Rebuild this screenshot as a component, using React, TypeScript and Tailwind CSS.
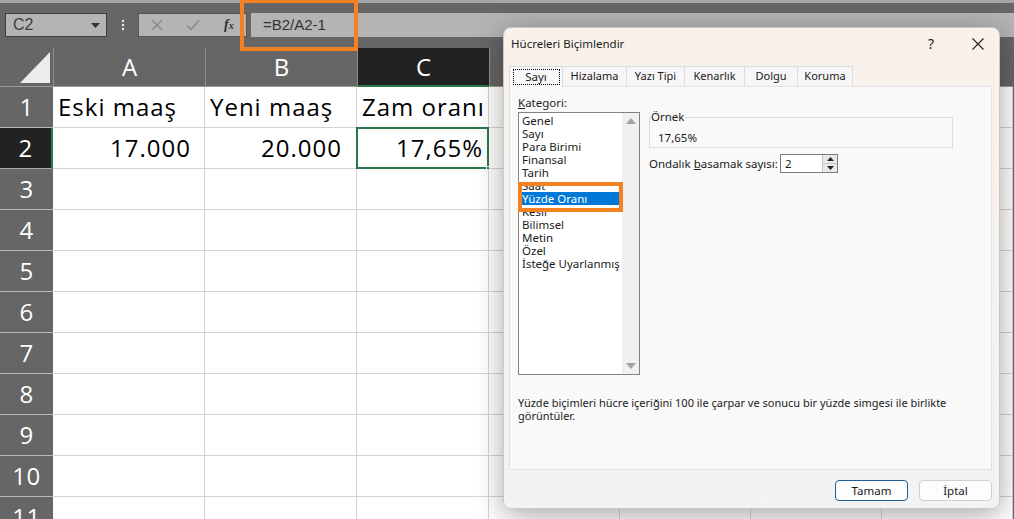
import React from "react";

const sheetFont = { fontFamily: '"Open Sans", "Noto Sans", sans-serif' };
const uiFont = { fontFamily: '"Noto Sans", "Open Sans", sans-serif' };

const letters = ["A", "B", "C", "D", "E", "F", "G"];
const rows = [1, 2, 3, 4, 5, 6, 7, 8, 9, 10, 11];

const cells: Record<string, { text: string; right?: boolean; pr?: string }> = {
  A1: { text: "Eski maaş" },
  B1: { text: "Yeni maaş" },
  C1: { text: "Zam oranı" },
  A2: { text: "17.000", right: true, pr: "pr-[13px]" },
  B2: { text: "20.000", right: true, pr: "pr-[14px]" },
  C2: { text: "17,65%", right: true, pr: "pr-[5px]" },
};

const categories = [
  "Genel",
  "Sayı",
  "Para Birimi",
  "Finansal",
  "Tarih",
  "Saat",
  "Yüzde Oranı",
  "Kesir",
  "Bilimsel",
  "Metin",
  "Özel",
  "İsteğe Uyarlanmış",
];

const tabs = [
  { label: "Sayı", w: "w-[54px]" },
  { label: "Hizalama", w: "w-[64px]" },
  { label: "Yazı Tipi", w: "w-[58px]" },
  { label: "Kenarlık", w: "w-[60px]" },
  { label: "Dolgu", w: "w-[53px]" },
  { label: "Koruma", w: "w-[55px]" },
];

// formula bar across the top
const FormulaBar = () => {
  return (
    <div className="h-[45px] flex items-start pt-[10px] pl-[5px]">
      <div className="w-[102px] h-[24px] bg-[#b4b4b4] border border-[#3f3f3f] flex items-center justify-between pl-[7px] pr-[6px]">
        <span className="text-[16px] text-[#3c3c3c]" style={{ fontFamily: '"Liberation Sans", Arial, sans-serif' }}>
          C2
        </span>
        <svg width="9" height="5" viewBox="0 0 9 5">
          <path d="M0 0 L9 0 L4.5 5 Z" fill="#333" />
        </svg>
      </div>
      <div className="w-[31px] h-[24px] flex items-center justify-center">
        <svg width="4" height="12" viewBox="0 0 4 12">
          <circle cx="2" cy="2" r="1.2" fill="#e6e6e6" />
          <circle cx="2" cy="6" r="1.2" fill="#e6e6e6" />
          <circle cx="2" cy="10" r="1.2" fill="#e6e6e6" />
        </svg>
      </div>
      <div className="w-[109px] h-[24px] bg-[#b4b4b4] border border-[#555] flex items-center">
        <svg width="12" height="12" viewBox="0 0 12 12" className="ml-[12px]">
          <path d="M1 1 L11 11 M11 1 L1 11" stroke="#8b8b8b" strokeWidth="1.6" />
        </svg>
        <svg width="14" height="12" viewBox="0 0 14 12" className="ml-[23px]">
          <path d="M1 6.5 L5 10.5 L13 1.5" stroke="#8b8b8b" strokeWidth="1.6" fill="none" />
        </svg>
        <span
          className="ml-[24px] text-[14px] italic font-bold text-[#2e2e2e] leading-none"
          style={{ fontFamily: '"Liberation Serif", serif' }}
        >
          f<span className="text-[10px]">x</span>
        </span>
      </div>
      <div className="w-[4px]" />
      <div className="flex-1 h-[24px] bg-[#b4b4b4] flex items-center pl-[12px]">
        <span className="text-[15px] text-[#333]" style={{ fontFamily: '"Liberation Sans", Arial, sans-serif' }}>
          =B2/A2-1
        </span>
      </div>
    </div>
  );
};

const Sheet = () => {
  return (
    <div className="grid grid-cols-[53px_152px_152px_132px_131px_131px_131px_131px]" style={sheetFont}>
      {/* header row */}
      <div className="h-[39px] bg-[#666] border-b border-[#9a9a9a] relative overflow-hidden">
        <svg width="53" height="39" viewBox="0 0 53 39" className="absolute inset-0">
          <path d="M50 4 L50 35 L20 35 Z" fill="#ececec" />
        </svg>
      </div>
      {letters.map((l) => (
        <div
          key={l}
          className={
            l === "C"
              ? "h-[39px] bg-[#222] border-l border-[#8e8e8e] border-b-2 border-b-[#2c7a4b] flex items-center justify-center text-white text-[24px]"
              : "h-[39px] bg-[#666] border-l border-[#8e8e8e] border-b border-b-[#9a9a9a] flex items-center justify-center text-white text-[24px]"
          }
        >
          {l}
        </div>
      ))}
      {rows.map((r) => (
        <React.Fragment key={r}>
          <div
            className={
              r === 2
                ? "h-[41px] bg-[#222] border-r-2 border-[#2c7a4b] border-b border-b-[#a9a9a9] flex items-center justify-center text-white text-[24px] tracking-[0.5px]"
                : "h-[41px] bg-[#666] border-b border-[#b8b8b8] flex items-center justify-center text-white text-[24px] tracking-[0.5px]"
            }
          >
            {r}
          </div>
          {letters.map((l) => {
            const c = cells[l + r];
            const sel = l === "C" && r === 2;
            return (
              <div
                key={l}
                className={
                  "h-[41px] bg-white border-r border-b border-[#d4d4d4] flex items-center relative text-[24px] tracking-[1px] text-black " +
                  (c && c.right ? "justify-end " + (c.pr || "") : "pl-[5px]")
                }
              >
                {c ? c.text : null}
                {sel && (
                  <>
                    <div className="absolute -left-px -top-px right-[-1px] bottom-[-1px] border-2 border-[#2c7a4b]" />
                    <div className="absolute right-[-5px] bottom-[-5px] w-[7px] h-[7px] bg-[#2c7a4b] border border-white" />
                  </>
                )}
              </div>
            );
          })}
        </React.Fragment>
      ))}
    </div>
  );
};

const Dialog = () => {
  return (
    <div
      className="absolute left-[503px] top-[27px] w-[497px] h-[482px] rounded-[8px] bg-linear-to-b from-[#f9f1ea] to-[#f3f3f3] shadow-[0_6px_28px_rgba(0,0,0,0.35)] flex flex-col text-[#1b1b1b] border border-[#c9c9c9]"
      style={uiFont}
    >
      {/* title bar */}
      <div className="h-[31px] flex items-center pl-[7px] relative">
        <span className="text-[11.5px]">Hücreleri Biçimlendir</span>
        <span className="absolute left-[424px] top-[5px] text-[14px] text-[#222]">?</span>
        <svg width="12" height="12" viewBox="0 0 12 12" className="absolute left-[468px] top-[10px]">
          <path d="M0.5 0.5 L11.5 11.5 M11.5 0.5 L0.5 11.5" stroke="#222" strokeWidth="1.1" />
        </svg>
      </div>
      {/* tabs */}
      <div className="mt-[6px] ml-[5px] flex items-end h-[21px]">
        {tabs.map((t, i) =>
          i === 0 ? (
            <div
              key={t.label}
              className={t.w + " h-[21px] bg-[#f9f9f9] border border-b-0 border-[#dadada] flex items-center justify-center relative z-10 -mb-px"}
            >
              <div className="absolute left-[3px] right-[2px] top-[2px] bottom-[2px] border border-dotted border-black" />
              <span className="text-[11.5px]">{t.label}</span>
            </div>
          ) : (
            <div
              key={t.label}
              className={t.w + " h-[20px] bg-[#f6f6f6] border border-l-0 border-b-0 border-[#dedede] flex items-center justify-center"}
            >
              <span className="text-[11px]">{t.label}</span>
            </div>
          )
        )}
      </div>
      {/* tab panel */}
      <div className="ml-[5px] w-[483px] h-[384px] bg-[#f9f9f9] border border-[#e2e2e2] flex flex-col pl-[8px] pt-[8px]">
        <div className="flex">
          <div className="flex flex-col w-[122px]">
            <span className="text-[11.5px] leading-[15px]">
              <span className="underline">K</span>ategori:
            </span>
            <div className="mt-[2px] h-[263px] border border-[#828282] bg-white flex relative">
              <div className="flex-1 pt-px pl-[3px] flex flex-col">
                {categories.map((c) =>
                  c === "Yüzde Oranı" ? (
                    <span key={c} className="text-[11.5px] leading-[13px] bg-[#0078d7] text-white">
                      {c}
                    </span>
                  ) : (
                    <span key={c} className="text-[11.5px] leading-[13px]">
                      {c}
                    </span>
                  )
                )}
              </div>
              <div className="w-[17px] bg-[#f0f0f0] flex flex-col justify-between items-center py-[5px]">
                <svg width="10" height="6" viewBox="0 0 10 6">
                  <path d="M0 6 L10 6 L5 0 Z" fill="#a3a3a3" />
                </svg>
                <svg width="10" height="6" viewBox="0 0 10 6">
                  <path d="M0 0 L10 0 L5 6 Z" fill="#a3a3a3" />
                </svg>
              </div>
              {/* orange highlight around the selected item */}
              <div className="absolute left-[-1px] top-[69px] w-[105px] h-[30px] border-[4px] border-[#f58220]" />
            </div>
          </div>
          <div className="ml-[9px] flex flex-col pt-[22px]">
            <div className="w-[304px] h-[31px] border border-[#dcdcdc] relative">
              <span className="absolute left-[1px] top-[-9px] bg-[#f9f9f9] text-[11.5px] leading-[15px] pr-[1px]">Örnek</span>
              <span className="absolute left-[8px] top-[12px] text-[11.5px] leading-[15px]">17,65%</span>
            </div>
            <div className="flex items-center mt-[6px]">
              <span className="text-[11.5px] w-[131px]">
                Ondalık <span className="underline">b</span>asamak sayısı:
              </span>
              <div className="w-[58px] h-[19px] border border-[#7a7a7a] bg-white flex">
                <span className="flex-1 text-[11.5px] leading-[17px] pl-[4px]">2</span>
                <div className="w-[15px] flex flex-col border-l border-[#c8c8c8]">
                  <div className="flex-1 bg-[#e9e9e9] flex items-center justify-center border-b border-[#c8c8c8]">
                    <svg width="7" height="4" viewBox="0 0 7 4">
                      <path d="M0 4 L7 4 L3.5 0 Z" fill="#222" />
                    </svg>
                  </div>
                  <div className="flex-1 bg-[#e9e9e9] flex items-center justify-center">
                    <svg width="7" height="4" viewBox="0 0 7 4">
                      <path d="M0 0 L7 0 L3.5 4 Z" fill="#222" />
                    </svg>
                  </div>
                </div>
              </div>
            </div>
          </div>
        </div>
        <p className="mt-[22px] text-[11px] leading-[12.5px] w-[440px]">
          Yüzde biçimleri hücre içeriğini 100 ile çarpar ve sonucu bir yüzde simgesi ile birlikte görüntüler.
        </p>
      </div>
      {/* buttons */}
      <div className="mt-[10px] flex justify-end gap-[11px] pr-[7px]">
        <button className="w-[73px] h-[21px] rounded-[4px] bg-[#fdfdfd] border border-[#1f5f99] text-[11.5px] leading-none">
          Tamam
        </button>
        <button className="w-[73px] h-[21px] rounded-[4px] bg-[#fdfdfd] border border-[#d0d0d0] text-[11.5px] leading-none">
          İptal
        </button>
      </div>
    </div>
  );
};

export default function App() {
  return (
    <div className="w-[1014px] h-[519px] overflow-hidden relative bg-[#666]">
      <div className="h-[3px] bg-[#a6a6a6]" />
      <FormulaBar />
      <Sheet />
      {/* orange annotation around the formula */}
      <div className="absolute left-[240px] top-0 w-[118px] h-[51px] border-[4px] border-t-[3px] border-[#f58220]" />
      <Dialog />
    </div>
  );
}
